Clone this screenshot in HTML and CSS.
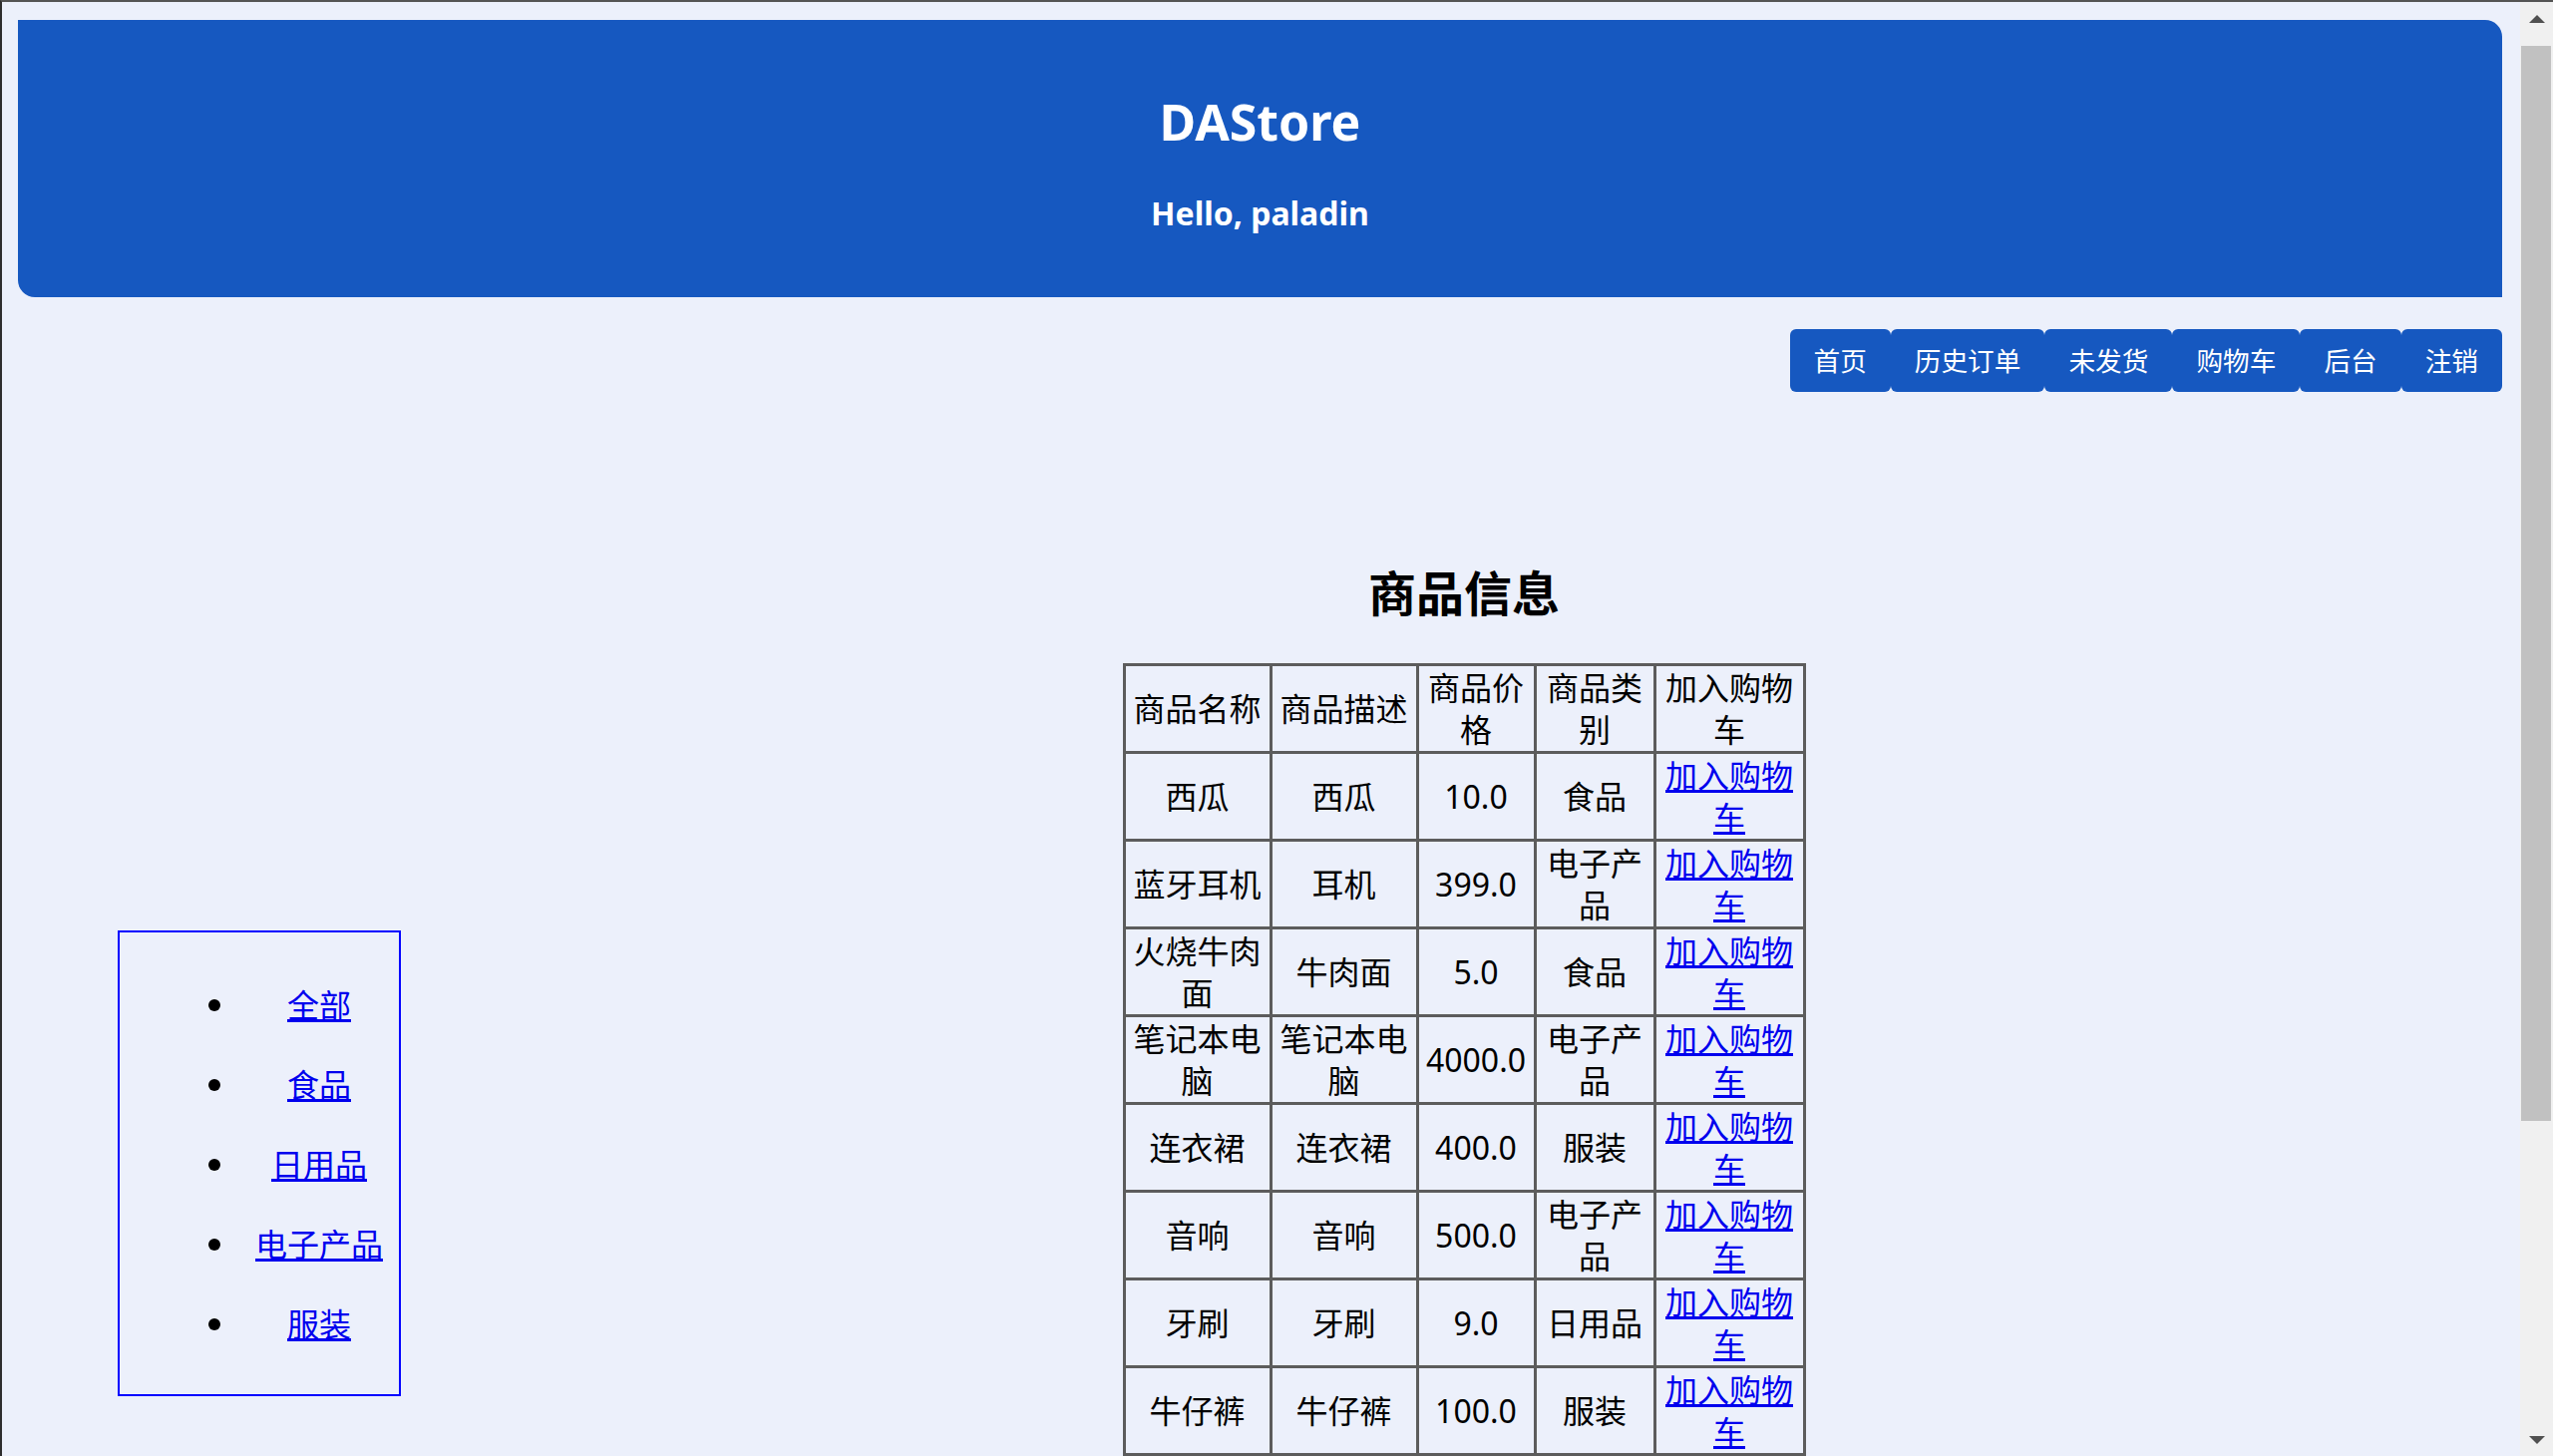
FILE: index.html
```html
<!DOCTYPE html>
<html lang="zh-CN">
<head>
<meta charset="utf-8">
<title>DAStore</title>
<link rel="stylesheet" href="styles.css">
</head>
<body>
<header class="banner">
  <h1 class="banner-title">DAStore</h1>
  <h3 class="banner-greet">Hello, paladin</h3>
</header>
<nav class="nav">
  <a class="nav-btn" href="#">首页</a>
  <a class="nav-btn" href="#">历史订单</a>
  <a class="nav-btn" href="#">未发货</a>
  <a class="nav-btn" href="#">购物车</a>
  <a class="nav-btn" href="#">后台</a>
  <a class="nav-btn" href="#">注销</a>
</nav>
<div class="content">
  <aside class="sidebar">
    <ul class="cat-list">
      <li><a href="#">全部</a></li>
      <li><a href="#">食品</a></li>
      <li><a href="#">日用品</a></li>
      <li><a href="#">电子产品</a></li>
      <li><a href="#">服装</a></li>
    </ul>
  </aside>
  <main class="main">
    <h2 class="main-title">商品信息</h2>
    <table class="goods">
      <colgroup>
        <col class="c-name"><col class="c-desc"><col class="c-price"><col class="c-cat"><col class="c-add">
      </colgroup>
      <tr><td>商品名称</td><td>商品描述</td><td>商品价格</td><td>商品类别</td><td>加入购物车</td></tr>
      <tr><td>西瓜</td><td>西瓜</td><td>10.0</td><td>食品</td><td><a href="#">加入购物车</a></td></tr>
      <tr><td>蓝牙耳机</td><td>耳机</td><td>399.0</td><td>电子产品</td><td><a href="#">加入购物车</a></td></tr>
      <tr><td>火烧牛肉面</td><td>牛肉面</td><td>5.0</td><td>食品</td><td><a href="#">加入购物车</a></td></tr>
      <tr><td>笔记本电脑</td><td>笔记本电脑</td><td>4000.0</td><td>电子产品</td><td><a href="#">加入购物车</a></td></tr>
      <tr><td>连衣裙</td><td>连衣裙</td><td>400.0</td><td>服装</td><td><a href="#">加入购物车</a></td></tr>
      <tr><td>音响</td><td>音响</td><td>500.0</td><td>电子产品</td><td><a href="#">加入购物车</a></td></tr>
      <tr><td>牙刷</td><td>牙刷</td><td>9.0</td><td>日用品</td><td><a href="#">加入购物车</a></td></tr>
      <tr><td>牛仔裤</td><td>牛仔裤</td><td>100.0</td><td>服装</td><td><a href="#">加入购物车</a></td></tr>
      <tr><td>洗发水</td><td>洗发水</td><td>35.0</td><td>日用品</td><td><a href="#">加入购物车</a></td></tr>
      <tr><td>手机</td><td>手机</td><td>2999.0</td><td>电子产品</td><td><a href="#">加入购物车</a></td></tr>
      <tr><td>面包</td><td>面包</td><td>8.0</td><td>食品</td><td><a href="#">加入购物车</a></td></tr>
      <tr><td>T恤</td><td>T恤</td><td>59.0</td><td>服装</td><td><a href="#">加入购物车</a></td></tr>
    </table>
  </main>
</div>
<div class="scrollbar" aria-hidden="true">
  <div class="sb-btn"><span class="sb-arrow-up"></span></div>
  <div class="sb-track"><div class="sb-thumb"></div></div>
  <div class="sb-btn"><span class="sb-arrow-down"></span></div>
</div>
</body>
</html>
```

FILE: styles.css
```css
html {
  background: #ecf0fb;
  border-top: 2px solid #545454;
  border-left: 2px solid #2e2e2e;
}

body {
  margin: 18px 51px 66px 16px;
  font-family: "Noto Sans", "Noto Sans CJK SC", sans-serif;
  font-size: 32px;
  color: #000;
}

/* fake browser scrollbar, as in the reference */
.scrollbar {
  position: fixed;
  top: 2px;
  right: 0;
  bottom: 0;
  width: 33px;
  background: #f0f0f0;
  display: flex;
  flex-direction: column;
}
.sb-btn {
  flex: none;
  height: 36px;
  display: flex;
  align-items: center;
  justify-content: center;
}
.sb-arrow-up {
  width: 0;
  height: 0;
  border-left: 8px solid transparent;
  border-right: 8px solid transparent;
  border-bottom: 8px solid #505050;
  margin-top: -2px;
}
.sb-arrow-down {
  width: 0;
  height: 0;
  border-left: 8px solid transparent;
  border-right: 8px solid transparent;
  border-top: 8px solid #505050;
  margin-top: 4px;
}
.sb-track {
  flex: 1;
  padding: 8px 2px 0 1px;
}
.sb-thumb {
  height: 1078px;
  background: #c1c1c1;
}

.banner {
  box-sizing: border-box;
  height: 278px;
  padding-top: 72px;
  background: #1658c0;
  color: #fff;
  text-align: center;
  border-radius: 0 17px 0 17px;
}
.banner-title {
  margin: 0;
  font-size: 50px;
  line-height: 60px;
  font-weight: 700;
}
.banner-greet {
  margin: 42px 0 0;
  font-size: 32px;
  line-height: 40px;
  font-weight: 700;
}

.nav {
  display: flex;
  justify-content: flex-end;
  margin-top: 32px;
}
.nav-btn {
  display: block;
  padding: 13px 24px 15px;
  font-family: "Noto Sans CJK SC", sans-serif;
  font-size: 26.67px;
  line-height: 35px;
  color: #fff;
  background: #1658c0;
  text-decoration: none;
  border-radius: 6px;
}

.content {
  display: flex;
  align-items: center;
  margin-top: 127px;
}

.sidebar {
  box-sizing: border-box;
  flex: none;
  width: 284px;
  height: 467px;
  margin-left: 100px;
  padding-top: 50px;
  border: 2px solid #0000ff;
}
.cat-list {
  margin: 0;
  padding: 0 0 0 120px;
  list-style: disc;
}
.cat-list li {
  text-align: center;
  line-height: 42px;
  margin-bottom: 38px;
  font-family: "Noto Sans CJK SC", sans-serif;
}
.cat-list li:last-child {
  margin-bottom: 0;
}
.cat-list a {
  color: #0000ee;
}

.main {
  flex: 1;
  margin-left: 25px;
  display: flex;
  flex-direction: column;
  align-items: center;
}
.main-title {
  margin: 40px 0 41px;
  font-family: "Noto Sans CJK SC", sans-serif;
  font-size: 48px;
  line-height: 64px;
  font-weight: 700;
}

.goods {
  width: 682px;
  table-layout: fixed;
  border-collapse: collapse;
  border: 3px solid #5c5c5c;
}
.c-name { width: 147px; }
.c-desc { width: 147px; }
.c-price { width: 118px; }
.c-cat { width: 120px; }
.c-add { width: 150px; }

.goods td {
  border: 3px solid #5c5c5c;
  padding: 1px 4px 0;
  line-height: 42px;
  text-align: center;
  vertical-align: middle;
  word-break: break-all;
}
.goods a {
  color: #0000ee;
}
```
